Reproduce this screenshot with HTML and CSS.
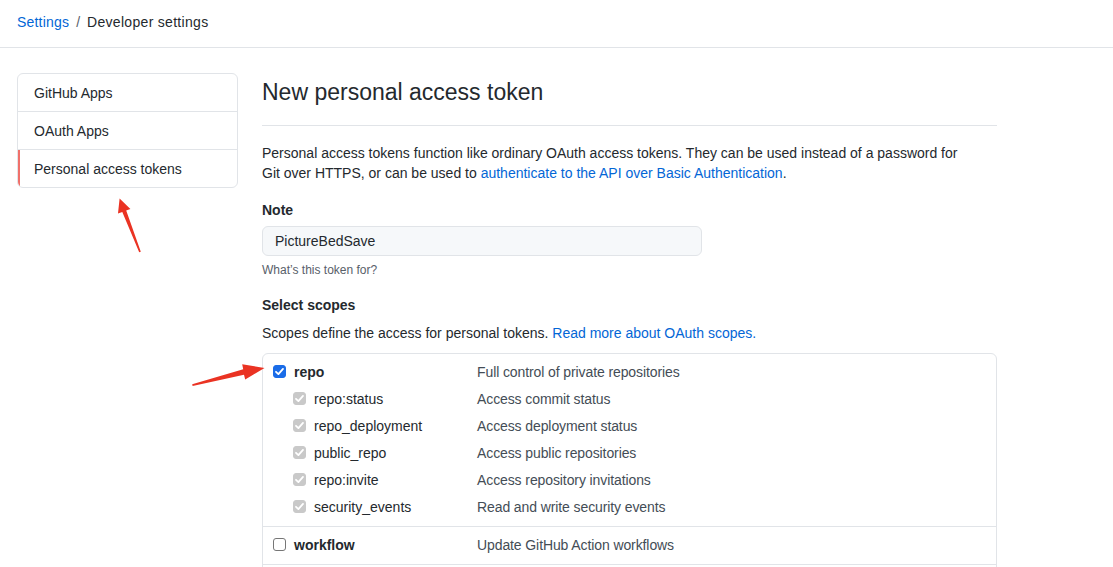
FILE: index.html
```html
<!DOCTYPE html>
<html>
<head>
<meta charset="utf-8">
<link rel="stylesheet" href="styles.css">
</head>
<body>
<header class="topbar">
  <a class="crumb-link" href="#">Settings</a><span class="crumb-sep">/</span><span class="crumb-current">Developer settings</span>
</header>
<div class="layout">
  <nav class="menu">
    <a class="menu-item" href="#">GitHub Apps</a>
    <a class="menu-item" href="#">OAuth Apps</a>
    <a class="menu-item selected" href="#">Personal access tokens</a>
  </nav>
  <main class="main">
    <h1 class="title">New personal access token</h1>
    <p class="lead">Personal access tokens function like ordinary OAuth access tokens. They can be used instead of a password for Git over HTTPS, or can be used to <a href="#">authenticate to the API over Basic Authentication</a>.</p>
    <label class="field-label">Note</label>
    <div class="input">PictureBedSave</div>
    <p class="note">What’s this token for?</p>
    <h3 class="field-label scopes-label">Select scopes</h3>
    <p class="scopes-desc">Scopes define the access for personal tokens. <a href="#">Read more about OAuth scopes.</a></p>
    <div class="scopes">
      <div class="group">
        <div class="row top">
          <span class="cell"><span class="cb checked"><svg viewBox="0 0 13 13" width="13" height="13"><path d="M3 6.8 L5.4 9.1 L10 3.9" fill="none" stroke="#fff" stroke-width="1.8" stroke-linecap="round" stroke-linejoin="round"/></svg></span><b>repo</b></span>
          <span class="desc">Full control of private repositories</span>
        </div>
        <div class="row sub">
          <span class="cell"><span class="cb disabled"><svg viewBox="0 0 13 13" width="13" height="13"><path d="M3 6.8 L5.4 9.1 L10 3.9" fill="none" stroke="#fff" stroke-width="1.8" stroke-linecap="round" stroke-linejoin="round"/></svg></span>repo:status</span>
          <span class="desc">Access commit status</span>
        </div>
        <div class="row sub">
          <span class="cell"><span class="cb disabled"><svg viewBox="0 0 13 13" width="13" height="13"><path d="M3 6.8 L5.4 9.1 L10 3.9" fill="none" stroke="#fff" stroke-width="1.8" stroke-linecap="round" stroke-linejoin="round"/></svg></span>repo_deployment</span>
          <span class="desc">Access deployment status</span>
        </div>
        <div class="row sub">
          <span class="cell"><span class="cb disabled"><svg viewBox="0 0 13 13" width="13" height="13"><path d="M3 6.8 L5.4 9.1 L10 3.9" fill="none" stroke="#fff" stroke-width="1.8" stroke-linecap="round" stroke-linejoin="round"/></svg></span>public_repo</span>
          <span class="desc">Access public repositories</span>
        </div>
        <div class="row sub">
          <span class="cell"><span class="cb disabled"><svg viewBox="0 0 13 13" width="13" height="13"><path d="M3 6.8 L5.4 9.1 L10 3.9" fill="none" stroke="#fff" stroke-width="1.8" stroke-linecap="round" stroke-linejoin="round"/></svg></span>repo:invite</span>
          <span class="desc">Access repository invitations</span>
        </div>
        <div class="row sub">
          <span class="cell"><span class="cb disabled"><svg viewBox="0 0 13 13" width="13" height="13"><path d="M3 6.8 L5.4 9.1 L10 3.9" fill="none" stroke="#fff" stroke-width="1.8" stroke-linecap="round" stroke-linejoin="round"/></svg></span>security_events</span>
          <span class="desc">Read and write security events</span>
        </div>
      </div>
      <div class="group">
        <div class="row top">
          <span class="cell"><span class="cb"></span><b>workflow</b></span>
          <span class="desc">Update GitHub Action workflows</span>
        </div>
      </div>
      <div class="group">
        <div class="row top"></div>
      </div>
    </div>
  </main>
</div>
<svg class="arrows" width="1113" height="567" viewBox="0 0 1113 567">
  <polygon fill="#ea3323" points="139.2,252.3 140.8,251.7 126.2,210.6 130.4,209.0 119.6,198.5 118.0,213.6 122.3,212.0"/>
  <polygon fill="#ea3323" points="192.2,384.2 192.6,385.9 244.0,374.8 245.2,379.4 264.5,368.0 242.2,364.2 243.2,369.2"/>
</svg>
</body>
</html>
```
FILE: styles.css
```css
* { box-sizing: border-box; }
html, body { margin: 0; padding: 0; }
body {
  font-family: "Liberation Sans", Arial, sans-serif;
  font-size: 14px;
  line-height: 20px;
  color: #24292e;
  background: #fff;
  position: relative;
  width: 1113px;
  height: 567px;
  overflow: hidden;
}
a { color: #0366d6; text-decoration: none; }

.topbar {
  height: 48px;
  padding: 12px 17px 0;
  border-bottom: 1px solid #e1e4e8;
}
.crumb-link { color: #0366d6; letter-spacing: 0.2px; }
.crumb-sep { color: #586069; margin: 0 7px; }
.crumb-current { color: #24292e; letter-spacing: 0.3px; }

.layout {
  display: flex;
  gap: 25px;
  padding: 25px 0 0 17px;
}
.menu {
  width: 221px;
  flex: none;
  align-self: flex-start;
  border: 1px solid #e1e4e8;
  border-radius: 6px;
  display: flex;
  flex-direction: column;
  overflow: hidden;
}
.menu-item {
  display: block;
  height: 38px;
  padding: 9px 16px 0;
  color: #24292e;
  border-bottom: 1px solid #e1e4e8;
  position: relative;
}
.menu-item:last-child { border-bottom: 0; height: 37px; }
.menu-item.selected::before {
  content: "";
  position: absolute;
  left: 0; top: 0; bottom: 0;
  width: 2px;
  background: #f0706a;
}

.main { width: 735px; flex: none; margin-left: -1px; }
.title {
  margin: 0;
  font-size: 23px;
  font-weight: 400;
  line-height: 38px;
  padding-bottom: 14px;
  border-bottom: 1px solid #e1e4e8;
}
.lead { margin: 17px 0 0; max-width: 700px; }
.field-label {
  display: block;
  margin: 17px 0 0;
  font-size: 14px;
  font-weight: 700;
  line-height: 20px;
}
.input {
  margin-top: 6px;
  width: 440px;
  height: 30px;
  padding: 4px 12px;
  line-height: 20px;
  background: #f6f8fa;
  border: 1px solid #e1e4e8;
  border-radius: 6px;
}
.note {
  margin: 5px 0 0;
  font-size: 12px;
  line-height: 18px;
  color: #586069;
}
.scopes-label { margin-top: 16px; }
.scopes-desc { margin: 8px 0 0; }

.scopes {
  margin-top: 10px;
  border: 1px solid #e1e4e8;
  border-radius: 6px;
}
.group {
  padding: 4px 0 6px;
  border-bottom: 1px solid #e1e4e8;
}
.group:last-child { border-bottom: 0; }
.row {
  display: grid;
  grid-template-columns: 214px 1fr;
  height: 27px;
  align-items: center;
}
.cell {
  display: flex;
  align-items: center;
  gap: 8px;
  padding-left: 10px;
  color: #24292e;
}
.row.sub .cell { padding-left: 30px; }
.desc { color: #444d56; letter-spacing: -0.1px; }
.cb {
  width: 13px;
  height: 13px;
  flex: none;
  border: 1px solid #767676;
  border-radius: 3px;
  background: #fff;
  display: inline-flex;
  align-items: center;
  justify-content: center;
  overflow: hidden;
}
.cb svg { display: block; flex: none; }
.cb.checked { background: #1a6ce8; border-color: #1a6ce8; }
.cb.disabled { background: #c9c9c9; border-color: #c9c9c9; }

.arrows {
  position: absolute;
  left: 0;
  top: 0;
  pointer-events: none;
}
```
